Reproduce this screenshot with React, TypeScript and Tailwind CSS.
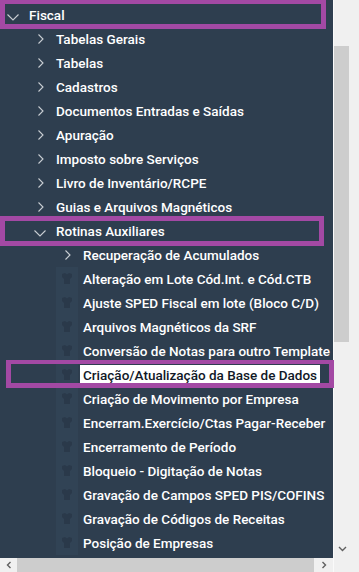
const rows: { label: string; level: number; kind: "open" | "closed" | "leaf"; selected?: boolean }[] = [
  { label: "Fiscal", level: 0, kind: "open" },
  { label: "Tabelas Gerais", level: 1, kind: "closed" },
  { label: "Tabelas", level: 1, kind: "closed" },
  { label: "Cadastros", level: 1, kind: "closed" },
  { label: "Documentos Entradas e Saídas", level: 1, kind: "closed" },
  { label: "Apuração", level: 1, kind: "closed" },
  { label: "Imposto sobre Serviços", level: 1, kind: "closed" },
  { label: "Livro de Inventário/RCPE", level: 1, kind: "closed" },
  { label: "Guias e Arquivos Magnéticos", level: 1, kind: "closed" },
  { label: "Rotinas Auxiliares", level: 1, kind: "open" },
  { label: "Recuperação de Acumulados", level: 2, kind: "closed" },
  { label: "Alteração em Lote Cód.Int. e Cód.CTB", level: 2, kind: "leaf" },
  { label: "Ajuste SPED Fiscal em lote (Bloco C/D)", level: 2, kind: "leaf" },
  { label: "Arquivos Magnéticos da SRF", level: 2, kind: "leaf" },
  { label: "Conversão de Notas para outro Template", level: 2, kind: "leaf" },
  { label: "Criação/Atualização da Base de Dados", level: 2, kind: "leaf", selected: true },
  { label: "Criação de Movimento por Empresa", level: 2, kind: "leaf" },
  { label: "Encerram.Exercício/Ctas Pagar-Receber", level: 2, kind: "leaf" },
  { label: "Encerramento de Período", level: 2, kind: "leaf" },
  { label: "Bloqueio - Digitação de Notas", level: 2, kind: "leaf" },
  { label: "Gravação de Campos SPED PIS/COFINS", level: 2, kind: "leaf" },
  { label: "Gravação de Códigos de Receitas", level: 2, kind: "leaf" },
  { label: "Posição de Empresas", level: 2, kind: "leaf" },
];

const indent = ["pl-[5px]", "pl-[32px]", "pl-[59px]"];

function RowIcon({ kind }: { kind: string }) {
  if (kind === "open") {
    return (
      <svg width="24" height="24" viewBox="0 0 24 24">
        <path d="M2.5 11.5 L8 17 L13.5 11.5" fill="none" stroke="#c9ced3" strokeWidth="1.1" />
      </svg>
    );
  }
  if (kind === "closed") {
    return (
      <svg width="24" height="24" viewBox="0 0 24 24">
        <path d="M6.5 7.5 L11 12 L6.5 16.5" fill="none" stroke="#c9ced3" strokeWidth="1.1" />
      </svg>
    );
  }
  return (
    <svg width="24" height="24" viewBox="0 0 24 24" className="-ml-[3px]">
      <rect x="0" y="0" width="22" height="24" fill="#314355" />
      <path d="M6 7 L9 6 L11 7.5 L13 6 L16 7 L16 10 L14 12 L14 17 L8 17 L8 12 L6 10 Z" fill="#2a394a" />
    </svg>
  );
}

export default function App() {
  return (
    <div className="relative w-[359px] h-[572px] overflow-hidden bg-[#f0f0f0] flex font-['Roboto',sans-serif]">
      <div className="w-[333px] flex flex-col">
        <div className="flex-1 bg-[#2e3e4f] pt-[3px] overflow-hidden">
          {rows.map((r) => (
            <div key={r.label} className={`h-[24px] flex items-center whitespace-nowrap ${indent[r.level]}`}>
              <div className="w-[24px] h-[24px] shrink-0">
                <RowIcon kind={r.kind} />
              </div>
              <span
                className={`text-[13.5px] font-medium leading-[21px] ${
                  r.selected ? "bg-white text-[#111827] pr-[3px] -ml-[3px] pl-[3px]" : "text-white"
                }`}
              >
                {r.label}
              </span>
            </div>
          ))}
        </div>
        <div className="h-[14px] flex items-stretch bg-[#f0f0f0]">
          <div className="w-[17px] flex items-center justify-center">
            <svg width="8" height="8" viewBox="0 0 8 8">
              <path d="M5.5 1 L2.5 4 L5.5 7" fill="none" stroke="#606060" strokeWidth="1.4" />
            </svg>
          </div>
          <div className="w-[297px] bg-[#cdcdcd]" />
          <div className="flex-1 flex items-center justify-center">
            <svg width="8" height="8" viewBox="0 0 8 8">
              <path d="M2.5 1 L5.5 4 L2.5 7" fill="none" stroke="#606060" strokeWidth="1.4" />
            </svg>
          </div>
        </div>
      </div>
      <div className="w-[26px] flex">
        <div className="w-[17px] flex flex-col bg-[#f0f0f0] border-l border-[#fafafa]">
          <div className="mt-[46px] h-[296px] w-[15px] bg-[#cdcdcd]" />
          <div className="mt-auto mb-[20px] flex justify-center">
            <svg width="9" height="6" viewBox="0 0 9 6">
              <path d="M1 1 L4.5 4.5 L8 1" fill="none" stroke="#606060" strokeWidth="1.4" />
            </svg>
          </div>
        </div>
      </div>

      <div className="absolute left-0 top-0 w-[326px] h-[29px] border-[#a349a4] border-t-4 border-l-[5px] border-r-[5px] border-b-[5px]" />
      <div className="absolute left-0 top-[216px] w-[324px] h-[30px] border-[5px] border-[#a349a4]" />
      <div className="absolute left-[6px] top-[360px] w-[328px] h-[28px] border-[5px] border-t-4 border-[#a349a4]" />
    </div>
  );
}
